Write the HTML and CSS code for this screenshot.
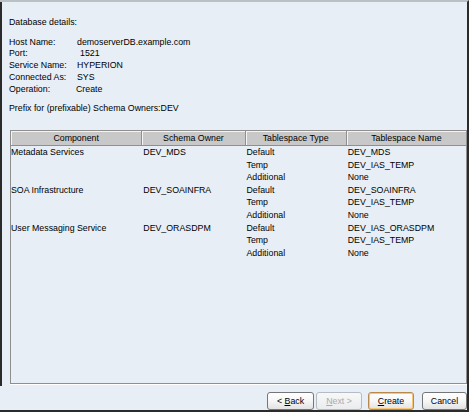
FILE: index.html
```html
<!DOCTYPE html>
<html>
<head>
<meta charset="utf-8">
<link rel="stylesheet" href="styles.css">
</head>
<body>
<div class="window">
  <div class="main">
    <div class="title">Database details:</div>
    <div class="info">
      <div class="label">Host Name:</div><div class="value">demoserverDB.example.com</div>
      <div class="label">Port:</div><div class="value port">1521</div>
      <div class="label">Service Name:</div><div class="value">HYPERION</div>
      <div class="label">Connected As:</div><div class="value">SYS</div>
      <div class="label">Operation:</div><div class="value op">Create</div>
    </div>
    <div class="prefix">Prefix for (prefixable) Schema Owners:DEV</div>
    <div class="table-wrap">
      <table class="grid">
        <colgroup>
          <col class="c1"><col class="c2"><col class="c3"><col class="c4">
        </colgroup>
        <thead>
          <tr><th>Component</th><th>Schema Owner</th><th>Tablespace Type</th><th>Tablespace Name</th></tr>
        </thead>
        <tbody>
          <tr><td class="first">Metadata Services</td><td>DEV_MDS</td><td>Default</td><td>DEV_MDS</td></tr>
          <tr><td class="first"></td><td></td><td>Temp</td><td>DEV_IAS_TEMP</td></tr>
          <tr><td class="first"></td><td></td><td>Additional</td><td>None</td></tr>
          <tr><td class="first">SOA Infrastructure</td><td>DEV_SOAINFRA</td><td>Default</td><td>DEV_SOAINFRA</td></tr>
          <tr><td class="first"></td><td></td><td>Temp</td><td>DEV_IAS_TEMP</td></tr>
          <tr><td class="first"></td><td></td><td>Additional</td><td>None</td></tr>
          <tr><td class="first">User Messaging Service</td><td>DEV_ORASDPM</td><td>Default</td><td>DEV_IAS_ORASDPM</td></tr>
          <tr><td class="first"></td><td></td><td>Temp</td><td>DEV_IAS_TEMP</td></tr>
          <tr><td class="first"></td><td></td><td>Additional</td><td>None</td></tr>
          <tr class="filler"><td colspan="4"></td></tr>
        </tbody>
      </table>
    </div>
  </div>
  <div class="footer">
    <button class="btn back">&lt; <u>B</u>ack</button>
    <button class="btn next" disabled><u>N</u>ext &gt;</button>
    <button class="btn create"><u>C</u>reate</button>
    <button class="btn cancel">Cancel</button>
  </div>
</div>
</body>
</html>
```

FILE: styles.css
```css
html, body {
  margin: 0;
  padding: 0;
}
body {
  width: 469px;
  height: 412px;
  overflow: hidden;
  background: #e7eef5;
  font-family: "Liberation Sans", Arial, sans-serif;
  font-size: 8.8px;
  color: #000;
}
.window {
  box-sizing: border-box;
  width: 469px;
  height: 412px;
  border-top: 2px solid #b9c1c4;
  border-right: 2px solid #2b2b2b;
  border-bottom: 2px solid #2b2b2b;
  display: flex;
  flex-direction: column;
}
.main {
  flex: 1;
  border-left: 2px solid #2b2b2b;
  padding: 14px 0 2px 7px;
  display: flex;
  flex-direction: column;
  min-height: 0;
}
.title {
  line-height: 12px;
}
.info {
  margin-top: 8.6px;
  display: grid;
  grid-template-columns: 68px auto;
  line-height: 11.75px;
}
.value.port { padding-left: 3px; }
.value.op { margin-left: -1px; }
.prefix {
  margin-top: 7.3px;
  line-height: 11.75px;
}
.table-wrap {
  margin-top: 15.6px;
  flex: 1;
  margin-left: 1px;
  border: 1px solid #8f8f8f;
  box-shadow: 0 1px 0 #ffffff;
  display: flex;
  flex-direction: column;
}
.grid {
  width: 100%;
  flex: 1;
  border-collapse: separate;
  border-spacing: 0;
  table-layout: fixed;
}
.c1 { width: 131px; }
.c2 { width: 103px; }
.c3 { width: 101px; }
.c4 { width: 119px; }
.grid th {
  height: 14px;
  padding: 0;
  font-weight: normal;
  text-align: center;
  background: #c8c8c8;
  border-right: 1px solid #8f8f8f;
  border-bottom: 1px solid #8f8f8f;
  box-shadow: inset 1px 1px 0 #f4f4f4;
  line-height: 14px;
  white-space: nowrap;
}
.grid th:last-child { border-right: none; }
.grid td {
  height: 12.6px;
  line-height: 12.6px;
  padding: 0 0 0 1px;
  white-space: nowrap;
  vertical-align: top;
}
.grid td.first { padding-left: 0; }
.grid tr.filler td { height: auto; }
.footer {
  height: 24px;
  box-sizing: border-box;
  padding-top: 6px;
  display: flex;
  justify-content: flex-end;
  align-items: flex-start;
}
.btn {
  box-sizing: border-box;
  height: 18px;
  margin: 0;
  padding: 0;
  font-family: "Liberation Sans", Arial, sans-serif;
  font-size: 8.8px;
  color: #000;
  border: 1px solid #767676;
  border-radius: 3px;
  background: linear-gradient(#ffffff 0%, #f6f6f6 50%, #e2e2e2 100%);
  text-align: center;
  line-height: 16px;
}
.btn u { text-decoration: underline; }
.back { width: 47px; }
.next {
  width: 46px;
  margin-left: 2px;
  color: #a8acb0;
  border-color: #b4bcc4;
  background: linear-gradient(#f8f8f8, #eaecee);
}
.create {
  width: 46px;
  margin-left: 6px;
  border-color: #b8894a;
  box-shadow: inset 0 0 0 1px #f6c778;
}
.cancel {
  width: 45px;
  margin-left: 8px;
}
```
